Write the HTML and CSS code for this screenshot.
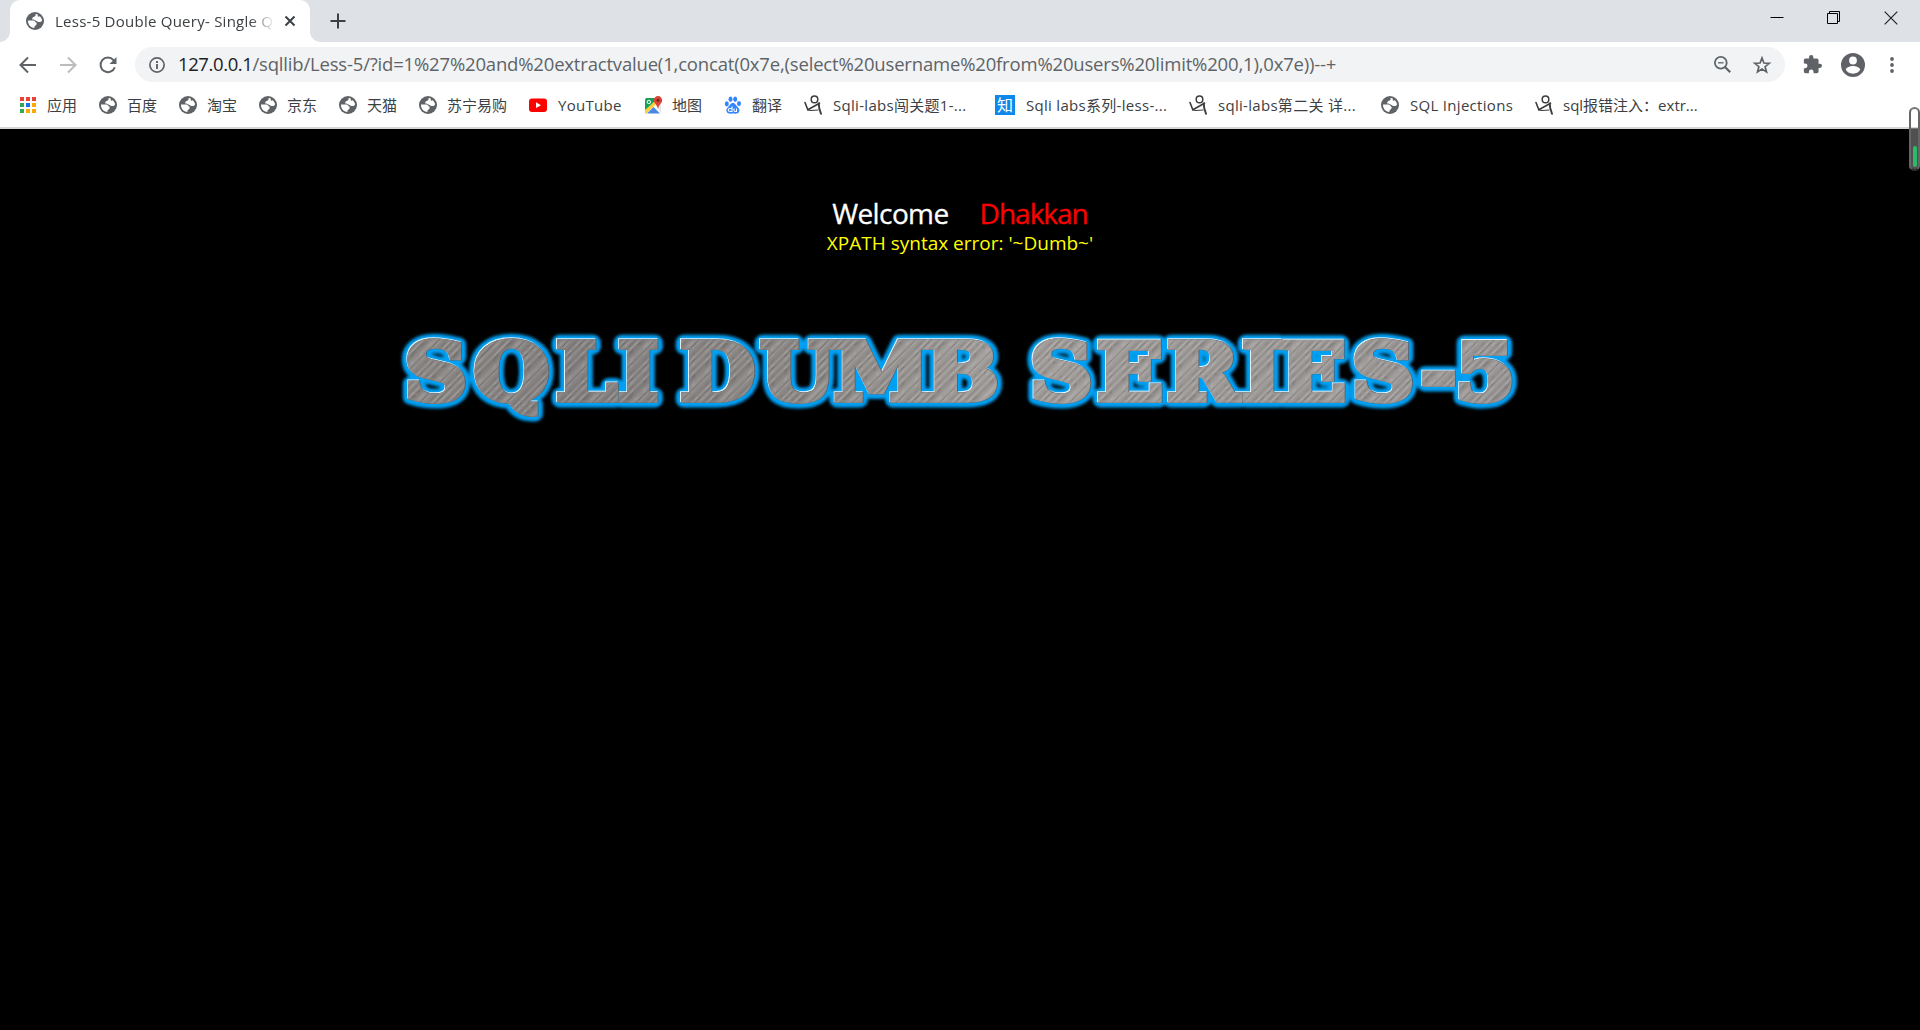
FILE: index.html
```html
<!DOCTYPE html>
<html lang="zh-CN">
<head>
<meta charset="utf-8">
<title>Less-5 Double Query- Single Quotes</title>
<link rel="stylesheet" href="styles.css">
</head>
<body>
<svg class="defs" width="0" height="0" aria-hidden="true">
  <symbol id="globe" viewBox="0 0 18 18">
    <circle cx="9" cy="9" r="9" fill="#5f6368"/>
    <path fill="#fff" d="M9.300 1.900C10 3 9.600 3.900 8.600 4.400 6.900 5 5.600 6.300 6.400 7.500c.8.900 3 .2 4.200 1.600.7.900 1.900 1.200 3.200.9 1.200-.2 1.800-.7 2.300-1.600-.3-1.500-1-2.900-2.300-4.200l-1.300.6-1-.9.6-1.200C11.400 2.200 10.400 1.900 9.300 1.900zM2 8.400c-.2 4 2.600 7.300 6.400 7.600l.3-2.100c1.700-.3 1.900-1.600 2-2.900-1.400-.7-1.700-2.200-3.500-2.400C5.400 8.400 3.700 8.800 2 8.400z"/>
  </symbol>
  <symbol id="csdn" viewBox="0 0 18 20">
    <g fill="none" stroke="#3c3c3c" stroke-linecap="round" stroke-linejoin="round">
      <circle cx="10.500" cy="4.400" r="3.300" stroke-width="1.500"/>
      <path d="M1 7.500 3.800 14.800 15.500 8.200" stroke-width="1.600"/>
      <path d="M3.800 14.800 7 15.500 14 15" stroke-width="1.200"/>
      <path d="M14.800 8.500 15.200 13 17 18.800" stroke-width="1.900"/>
    </g>
  </symbol>
</svg>

<div class="tabstrip">
  <div class="tab">
    <svg class="i18"><use href="#globe"/></svg>
    <span class="tab-title">Less-5 Double Query- Single Q</span>
    <svg class="tab-close" viewBox="0 0 12 12"><path d="M1.500 1.500l9 9M10.500 1.500l-9 9" stroke="#3c4043" stroke-width="2"/></svg>
  </div>
  <svg class="newtab" viewBox="0 0 16 16"><path d="M8 .5v15M.5 8h15" stroke="#3c4043" stroke-width="2"/></svg>
  <div class="window-controls">
    <svg viewBox="0 0 14 14"><path d="M.5 6.500h13" stroke="#000"/></svg>
    <svg viewBox="0 0 14 14"><path d="M.5 2.500h10v10H.5zM2.500 2.500v-2h10v10h-2" fill="none" stroke="#000"/></svg>
    <svg viewBox="0 0 14 14"><path d="M.7.7l12.600 12.600M13.300.7L.7 13.300" stroke="#222" stroke-width="1.200"/></svg>
  </div>
</div>

<div class="toolbar">
  <svg class="nav" viewBox="0 0 18 18"><path d="M17 9H2M9 1.500 1.500 9 9 16.500" fill="none" stroke="#5f6368" stroke-width="2"/></svg>
  <svg class="nav" viewBox="0 0 18 18"><path d="M1 9h15M9 1.500 16.500 9 9 16.500" fill="none" stroke="#babcbe" stroke-width="2"/></svg>
  <svg class="nav" viewBox="0 0 18 18"><path d="M15.800 11.200A7.300 7.300 0 1 1 14.500 4.200L16 5.800" fill="none" stroke="#5f6368" stroke-width="2"/><path d="M17.500 1v7h-7z" fill="#5f6368"/></svg>
  <div class="omnibox">
    <svg class="info" viewBox="0 0 16 16"><circle cx="8" cy="8" r="7.100" fill="none" stroke="#5f6368" stroke-width="1.700"/><path d="M8 7v5M8 4v1.900" stroke="#5f6368" stroke-width="1.900"/></svg>
    <span class="url"><b>127.0.0.1</b>/sqllib/Less-5/?id=1%27%20and%20extractvalue(1,concat(0x7e,(select%20username%20from%20users%20limit%200,1),0x7e))--+</span>
    <svg class="zoom" viewBox="0 0 17 17"><circle cx="6.800" cy="6.800" r="5.900" fill="none" stroke="#5f6368" stroke-width="1.800"/><path d="M4 6.800h5.600" stroke="#5f6368" stroke-width="1.300"/><path d="M11 11l5.200 5.200" stroke="#5f6368" stroke-width="2.200"/></svg>
    <svg class="i18" viewBox="0 0 18 18"><path d="M9 2l1.900 5 5.400.3-4.200 3.400 1.400 5.200L9 13l-4.500 2.900 1.400-5.200L1.700 7.300 7.100 7z" fill="none" stroke="#5f6368" stroke-width="1.700"/></svg>
  </div>
  <svg class="ext" viewBox="1 1 22 22"><path fill="#5f6368" d="M20.500 11H19V7c0-1.100-.9-2-2-2h-4V3.500a2.500 2.500 0 0 0-5 0V5H4c-1.100 0-2 .9-2 2v3.800h1.500a2.700 2.700 0 0 1 0 5.400H2V20c0 1.100.9 2 2 2h3.800v-1.500a2.700 2.700 0 0 1 5.400 0V22H17c1.100 0 2-.9 2-2v-4h1.500a2.500 2.500 0 0 0 0-5z"/></svg>
  <svg class="avatar" viewBox="2 2 20 20"><path fill="#5f6368" d="M12 2a10 10 0 1 0 0 20 10 10 0 0 0 0-20zm0 3a3 3 0 1 1 0 6.500A3.200 3.200 0 0 1 12 5zm0 14.200a7.200 7.200 0 0 1-6-3.200c0-2 4-3.100 6-3.100s6 1.100 6 3.100a7.200 7.200 0 0 1-6 3.200z"/></svg>
  <svg class="menu" viewBox="0 0 4 16"><g fill="#5f6368"><circle cx="2" cy="2" r="1.900"/><circle cx="2" cy="8" r="1.900"/><circle cx="2" cy="14" r="1.900"/></g></svg>
</div>

<div class="bookmarks">
  <div class="bm short"><svg class="i18" viewBox="0 0 18 18"><path fill="#ea4335" d="M1 1h4v4H1zM7 1h4v4H7zM13 1h4v4h-4z"/><path fill="#34a853" d="M1 7h4v4H1zM1 13h4v4H1z"/><path fill="#1a73e8" d="M7 7h4v4H7z"/><path fill="#fbab05" d="M13 7h4v4h-4zM7 13h4v4H7zM13 13h4v4h-4z"/></svg><span>应用</span></div>
  <div class="bm short"><svg class="i18"><use href="#globe"/></svg><span>百度</span></div>
  <div class="bm short"><svg class="i18"><use href="#globe"/></svg><span>淘宝</span></div>
  <div class="bm short"><svg class="i18"><use href="#globe"/></svg><span>京东</span></div>
  <div class="bm short"><svg class="i18"><use href="#globe"/></svg><span>天猫</span></div>
  <div class="bm suning"><svg class="i18"><use href="#globe"/></svg><span>苏宁易购</span></div>
  <div class="bm youtube latin"><svg class="i18" viewBox="0 0 18 18"><rect y="2.500" width="18" height="13.500" rx="3" fill="#f00"/><path d="M7 6.300v5.800l5-2.900z" fill="#fff"/></svg><span>YouTube</span></div>
  <div class="bm short"><svg class="i18 map" viewBox="0 0 18 18"><path fill="#1a9f5b" d="M1 3.500 2 2h11v5L1 16z"/><path fill="#fbcf3d" d="M1 14 12 4l2 2L2.500 17.500H1z"/><path fill="#e4e5e6" d="M11 8l6-2v11z"/><path fill="#4a86e8" d="M3 17.500 9.500 11l6.500 6.500z"/><circle cx="4.800" cy="6" r="1.700" fill="none" stroke="#fff"/><path fill="#dc4437" d="M14 .1a4.300 4.300 0 0 1 4.200 4.400c0 2.500-3.500 4-4.200 8.500-.7-4.500-4.300-6-4.300-8.500A4.300 4.300 0 0 1 14 .1z"/><circle cx="14" cy="4.300" r="1.500" fill="#7b231e"/></svg><span>地图</span></div>
  <div class="bm short"><svg class="i18" viewBox="0 0 18 18"><g fill="#3385ff"><ellipse cx="2.800" cy="7.800" rx="2" ry="2.600"/><ellipse cx="6.500" cy="3.200" rx="2" ry="2.700"/><ellipse cx="11.200" cy="3.300" rx="2" ry="2.700"/><ellipse cx="15" cy="7.500" rx="2" ry="2.500"/><path d="M8.900 7c2.400 0 3 2.500 4.700 3.900 1.800 1.500 2.300 3 1.500 4.900-.9 2.100-3 2-6.200 1.800-3.200.2-5.400.3-6.200-1.800-.8-1.900-.2-3.400 1.500-4.900C5.900 9.500 6.500 7 8.900 7z"/></g><path d="M8 10.500v5H6c-2.300 0-2.300-3 0-3h1.500M10 12.500v2.300c.3.900 2 .7 2.500.7v-3" fill="none" stroke="#fff" stroke-width="1.100"/></svg><span>翻译</span></div>
  <div class="bm labs1 latin"><svg class="csdn"><use href="#csdn"/></svg><span>Sqli-labs闯关题1-...</span></div>
  <div class="bm labs2 latin"><i class="zhi">知</i><span>Sqli labs系列-less-...</span></div>
  <div class="bm labs3 latin"><svg class="csdn"><use href="#csdn"/></svg><span>sqli-labs第二关 详...</span></div>
  <div class="bm inject latin"><svg class="i18"><use href="#globe"/></svg><span>SQL Injections</span></div>
  <div class="bm report"><svg class="csdn"><use href="#csdn"/></svg><span>sql报错注入：extr...</span></div>
</div>

<main class="page">
  <div class="welcome"><span>Welcome</span><span class="name">Dhakkan</span></div>
  <div class="error">XPATH syntax error: '~Dumb~'</div>
  <svg class="banner" viewBox="0 0 1140 110" role="img" aria-label="SQLI DUMB SERIES-5">
    <defs>
      <linearGradient id="base" gradientUnits="userSpaceOnUse" x1="16" y1="0" x2="1020" y2="0">
        <stop offset="0" stop-color="#8b8785"/><stop offset=".15" stop-color="#858180"/><stop offset=".35" stop-color="#8d8987"/><stop offset=".52" stop-color="#a09c9a"/><stop offset=".75" stop-color="#9d9997"/><stop offset="1" stop-color="#989594"/>
      </linearGradient>
      <pattern id="brush" width="29" height="240" patternUnits="userSpaceOnUse" patternTransform="rotate(42)">
        <g fill="#fff"><path opacity=".07" d="M0 0h2v240H0zM13 0h3v240h-3z"/><path opacity=".14" d="M6 0h1v240H6zM18 0h1v240h-1zM25 0h1v240h-1z"/></g>
        <g fill="#000"><path opacity=".05" d="M3 0h2v240H3zM9 0h2v240H9zM22 0h2v240h-2z"/><path opacity=".1" d="M8 0h1v240H8zM17 0h1v240h-1zM27 0h1v240h-1z"/></g>
      </pattern>
      <filter id="glow" x="-5%" y="-20%" width="110%" height="140%"><feGaussianBlur stdDeviation="1.600"/></filter>
      <g id="letters" transform="scale(1.110 1)">
        <text y="80" x="13.100 75.500 149.500 205.400">SQLI</text>
        <text y="80" x="261.200 333.400 400 482.500">DUMB</text>
        <text y="80" x="576.500 636.900 700 767.500 801.800 866.500 928.500 959.500">SERIES-5</text>
      </g>
    </defs>
    <use href="#letters" class="halo" filter="url(#glow)"/>
    <use href="#letters" class="shine"/>
    <use href="#letters" class="shade"/>
    <use href="#letters" class="metal"/>
    <use href="#letters" class="grain"/>
  </svg>
  <div class="meter"><i></i></div>
</main>
</body>
</html>
```
FILE: styles.css
```css
* { box-sizing: border-box; }
body {
  margin: 0;
  height: 1030px;
  display: flex;
  flex-direction: column;
  overflow: hidden;
  background: #fff;
  font-family: "Open Sans", "Noto Sans CJK SC", sans-serif;
  color: #3c4043;
}
svg { display: block; flex: none; overflow: visible; }
.defs { position: absolute; }
.i18 { width: 18px; height: 18px; }

.tabstrip {
  height: 42px;
  flex: none;
  display: flex;
  align-items: center;
  padding-left: 10px;
  background: #dee1e6;
}
.tab {
  position: relative;
  width: 300px;
  height: 42px;
  display: flex;
  align-items: center;
  padding: 0 14px 0 16px;
  background: #fff;
  border-radius: 10px 10px 0 0;
}
.tab::before, .tab::after {
  content: "";
  position: absolute;
  bottom: 0;
  width: 10px;
  height: 10px;
}
.tab::before { left: -10px; background: radial-gradient(circle at 0 0, transparent 9.500px, #fff 10px); }
.tab::after { right: -10px; background: radial-gradient(circle at 100% 0, transparent 9.500px, #fff 10px); }
.tab-title {
  width: 220px;
  margin-left: 11px;
  font-size: 15px;
  letter-spacing: .25px;
  white-space: nowrap;
  -webkit-mask-image: linear-gradient(90deg, #000 195px, transparent 220px);
  mask-image: linear-gradient(90deg, #000 195px, transparent 220px);
}
.tab-close { width: 12px; height: 12px; margin-left: 9px; }
.newtab { width: 16px; height: 16px; margin-left: 20px; }
.window-controls {
  display: flex;
  gap: 43px;
  margin: 0 22px 6px auto;
}
.window-controls svg { width: 14px; height: 14px; }

.toolbar {
  height: 45px;
  flex: none;
  display: flex;
  align-items: center;
  padding-left: 19px;
}
.nav { width: 18px; height: 18px; margin-right: 22px; }
.omnibox {
  width: 1650px;
  height: 35px;
  margin-left: -4px;
  padding: 0 14px;
  display: flex;
  align-items: center;
  background: #f1f3f4;
  border-radius: 18px;
}
.info { width: 16px; height: 16px; }
.url {
  flex: 1;
  margin-left: 13px;
  padding-bottom: 2px;
  font-size: 18.500px;
  letter-spacing: -.18px;
  line-height: 32px;
  white-space: nowrap;
  color: #5f6368;
}
.url b { font-weight: 400; color: #202124; letter-spacing: -.4px; }
.zoom { width: 17px; height: 17px; margin-right: 22px; }
.ext { width: 19px; height: 19px; margin-left: 18px; }
.avatar { width: 24px; height: 24px; margin-left: 19px; }
.menu { width: 4px; height: 16px; margin-left: 25px; }

.bookmarks {
  height: 42px;
  flex: none;
  display: flex;
  align-items: center;
  padding: 0 0 5px 19px;
  border-bottom: 2px solid #d5d6d8;
  font-size: 15px;
}
.bm { display: flex; align-items: center; gap: 10px; flex: none; white-space: nowrap; }
.latin { letter-spacing: .3px; }
.latin span { margin-left: 1px; }
.short { width: 80px; }
.suning { width: 110px; }
.youtube { width: 115px; }
.labs1 { width: 191px; }
.labs2 { width: 194px; }
.labs3 { width: 192px; }
.inject { width: 154px; }
.csdn { width: 18px; height: 20px; }
.zhi {
  width: 20px;
  height: 20px;
  font: 16px/19px "Noto Sans CJK SC", sans-serif;
  letter-spacing: 0;
  text-align: center;
  color: #fff;
  background: #0f88eb;
}

.page {
  position: relative;
  flex: 1;
  display: flex;
  flex-direction: column;
  align-items: center;
  background: #000;
}
.welcome {
  display: flex;
  gap: 31px;
  margin-top: 65px;
  font-size: 28px;
  line-height: 39px;
  letter-spacing: -.6px;
  color: #fff;
  -webkit-text-stroke: .3px;
}
.name { color: #f00; letter-spacing: -1px; }
.error { font-size: 19px; line-height: 20px; color: #ff0; white-space: nowrap; }
.banner {
  width: 1140px;
  height: 110px;
  margin-top: 67px;
  font: bold 78px "DejaVu Serif", serif;
}
.halo { fill: #00a0f4; stroke: #00a0f4; stroke-width: 15px; stroke-linejoin: round; }
.shine { fill: #e8f4fb; stroke: #e8f4fb; stroke-width: 6px; transform: translate(-.6px, -.6px); }
.shade { fill: #4b5d68; stroke: #4b5d68; stroke-width: 6px; transform: translate(.5px, .5px); }
.metal { fill: url(#base); stroke: url(#base); stroke-width: 5.600px; }
.grain { fill: url(#brush); stroke: url(#brush); stroke-width: 5.600px; paint-order: stroke; }
.meter {
  position: absolute;
  right: 0;
  top: -22px;
  width: 11px;
  height: 64px;
  padding: 2px 1px;
  display: flex;
  justify-content: center;
  align-items: flex-end;
  border: 2px solid;
  border-color: #777 #666 #303030;
  border-radius: 6px;
  background: linear-gradient(#fff 18px, #505050 20px);
}
.meter i { width: 4px; height: 21px; border-radius: 2px; background: #2abb69; flex: none; }
```
